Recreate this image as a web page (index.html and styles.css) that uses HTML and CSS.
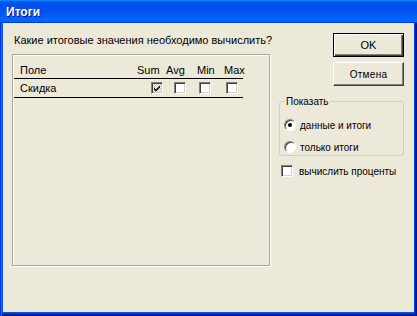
FILE: index.html
```html
<!DOCTYPE html>
<html lang="ru">
<head>
<meta charset="utf-8">
<title>Итоги</title>
<link rel="stylesheet" href="styles.css">
</head>
<body>
<div class="window">
  <div class="titlebar"><span class="title">Итоги</span></div>
  <div class="content">
    <div class="left">
      <div class="prompt">Какие итоговые значения необходимо вычислить?</div>
      <div class="list">
        <div class="row head">
          <span class="c-field">Поле</span>
          <span class="c-sum">Sum</span>
          <span class="c-avg">Avg</span>
          <span class="c-min">Min</span>
          <span class="c-max">Max</span>
        </div>
        <div class="row item">
          <span class="c-field">Скидка</span>
          <span class="c-sum"><i class="cb checked"><svg viewBox="0 0 8 8" width="8" height="8"><path d="M1 3.5 L3 5.5 L7 1.5 L7 3.5 L3 7.5 L1 5.5 Z" fill="#000"/></svg></i></span>
          <span class="c-avg"><i class="cb"></i></span>
          <span class="c-min"><i class="cb"></i></span>
          <span class="c-max"><i class="cb"></i></span>
        </div>
      </div>
    </div>
    <div class="right">
      <button class="btn default">OK</button>
      <button class="btn small">Отмена</button>
      <fieldset class="group">
        <legend>Показать</legend>
        <div class="opt"><i class="radio on"></i><span>данные и итоги</span></div>
        <div class="opt"><i class="radio"></i><span>только итоги</span></div>
      </fieldset>
      <div class="opt check"><i class="cb"></i><span>вычислить проценты</span></div>
    </div>
  </div>
</div>
</body>
</html>
```

FILE: styles.css
```css
* { box-sizing: border-box; }
html, body { margin: 0; padding: 0; }
body {
  width: 417px;
  height: 316px;
  font-family: "Liberation Sans", Arial, sans-serif;
  font-size: 11px;
  color: #000;
  overflow: hidden;
}
.window {
  width: 417px;
  height: 316px;
  display: flex;
  flex-direction: column;
  background: #0055e5;
  padding: 0 3px 4px 3px;
  box-shadow: inset 1px 0 #0831d9, inset 2px 0 #166aee, inset -1px -1px #00138c, inset -2px -2px #001ea0, inset -3px -3px #003bda;
}
.titlebar {
  height: 23px;
  margin: 0 -3px;
  padding-left: 6px;
  display: flex;
  align-items: center;
  background: linear-gradient(180deg, #0997ff, #0053ee 8%, #0050ee 40%, #06f 88%, #06f 93%, #005bff 95%, #003dd7 96%, #003dd7);
}
.title {
  color: #fff;
  font-weight: bold;
  font-size: 12px;
  text-shadow: 1px 1px #0f1089;
}
.content {
  flex: 1;
  background: #ece9d8;
  display: flex;
  gap: 9px;
  padding: 10px 10px 0 9px;
}
.left { width: 258px; }
.prompt {
  line-height: 14px;
  padding-left: 2px;
  margin-bottom: 7px;
  white-space: nowrap;
}
.list {
  height: 212px;
  border: 1px solid #aca899;
  box-shadow: inset 1px 1px #fff, 1px 1px #fff;
  padding: 0 0 0 1px;
}
.row {
  display: flex;
  width: 229px;
  border-bottom: 1px solid #000;
}
.row.head { height: 24px; align-items: flex-end; padding-bottom: 1px; line-height: 13px; }
.row.item { height: 19px; align-items: center; line-height: 13px; }
.c-field { width: 123px; padding-left: 6px; }
.c-sum { width: 29px; }
.c-avg { width: 31px; }
.c-min { width: 27px; }
.c-max { width: 19px; }
.item .c-sum { padding-left: 14px; }
.item .c-avg { padding-left: 8px; }
.item .c-min { padding-left: 2px; }
.item .c-max { padding-left: 2px; }
.item span { display: flex; align-items: center; }

.cb {
  display: inline-block;
  width: 12px;
  height: 12px;
  background: #fff;
  border: 1px solid;
  border-color: #808080 #fff #fff #808080;
  box-shadow: inset 1px 1px #404040, inset -1px -1px #d4d0c8;
  flex: none;
  position: relative;
}
.cb.checked {
  background: repeating-conic-gradient(#c4c1b8 0 25%, #fff 0 50%) 0 0 / 2px 2px;
}
.cb svg { position: absolute; left: 1px; top: 1px; }

.right {
  width: 126px;
  display: flex;
  flex-direction: column;
  font-size: 10px;
}
.btn {
  align-self: flex-end;
  width: 71px;
  height: 24px;
  background: #ece9d8;
  font-family: "Liberation Sans", Arial, sans-serif;
  font-size: 11px;
  color: #000;
  padding: 0;
  border: 1px solid;
  border-color: #fff #404040 #404040 #fff;
  box-shadow: inset -1px -1px #808080;
}
.btn.default {
  border: 1px solid #000;
  box-shadow: inset 1px 1px #fff, inset -1px -1px #404040, inset -2px -2px #808080;
}
.btn.small { margin-top: 5px; font-size: 10px; letter-spacing: 0.3px; }
.group {
  margin: 9px 0 0 0;
  padding: 6px 4px 3px 4px;
  height: 61px;
  border: 1px solid #d0d0bf;
  border-radius: 3px;
}
.group legend {
  padding: 0 1px;
  margin-left: 1px;
  line-height: 13px;
}
.opt {
  display: flex;
  align-items: center;
  gap: 3px;
  height: 22px;
  line-height: 13px;
  white-space: nowrap;
}
.radio {
  display: inline-block;
  width: 12px;
  height: 12px;
  border-radius: 50%;
  background: #fff;
  border: 1px solid;
  border-color: #808080 #fff #fff #808080;
  box-shadow: inset 1px 1px #404040;
  position: relative;
  flex: none;
}
.radio.on::after {
  content: "";
  position: absolute;
  left: 3px;
  top: 3px;
  width: 4px;
  height: 4px;
  border-radius: 50%;
  background: #000;
}
.opt span { margin-left: 1px; }
.check { margin-top: 4px; padding-left: 2px; gap: 5px; }
```
